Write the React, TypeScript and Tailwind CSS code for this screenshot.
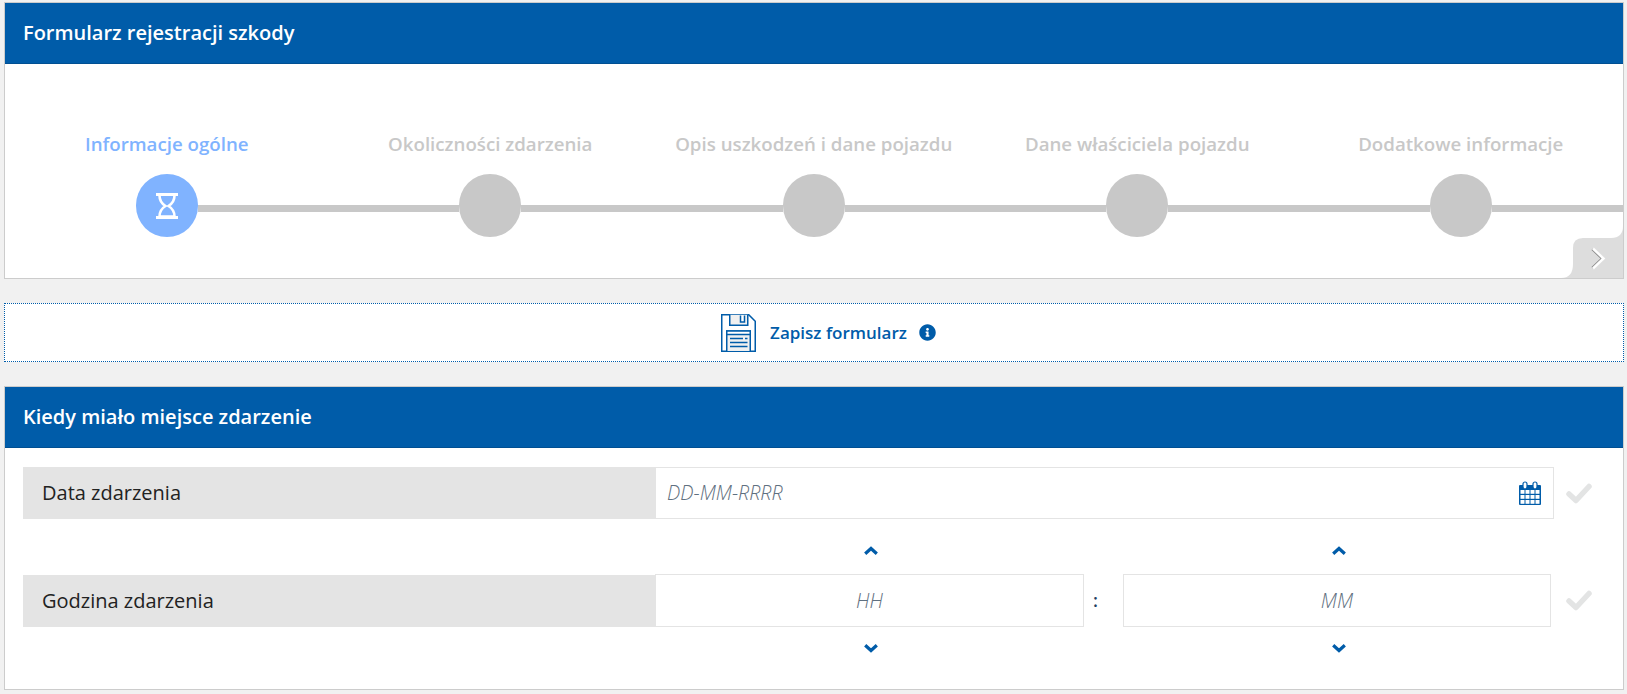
import { FaInfoCircle } from "react-icons/fa";

const steps = [
  "Informacje ogólne",
  "Okoliczności zdarzenia",
  "Opis uszkodzeń i dane pojazdu",
  "Dane właściciela pojazdu",
  "Dodatkowe informacje",
];

const Hourglass = () => (
  <svg width="24" height="26" viewBox="0 0 24 26" fill="none" stroke="#fff">
    <path d="M1 1.500h22M1 24.500h22" strokeWidth="2.800" />
    <path d="M4.500 2.500c0 5 2 8 6 10.500-4 2.500-6 6-6 10.500h15c0-4.500-2-8-6-10.500 4-2.500 6-5.500 6-10.500" strokeWidth="2.600" />
  </svg>
);

const Floppy = () => (
  <svg width="35" height="38" viewBox="0 0 35 38" fill="none" stroke="#005ca9" strokeWidth="1.500">
    <path d="M.75.75h27l6.500 6.500v30h-33.500z" fill="#fff" />
    <path d="M8.750.75v10.500h18v-10.500" fill="#f0f0f0" />
    <path d="M19.500 1.500v6.500h4v-6.500" fill="#fff" />
    <path d="M5.750 37v-20h23.500v20" fill="#f0f0f0" />
    <path d="M5.750 17h23.500v3.500h-23.500z" fill="#fff" />
    <path d="M9 24.500h13M24 24.500h2.500M9 28.500h17.500M9 32.500h17.500" />
  </svg>
);

const Calendar = () => (
  <svg width="24" height="25" viewBox="0 0 24 25" fill="none">
    <rect x="1" y="4" width="22" height="20" rx="1" fill="#005ca9" />
    <rect x="5" y="1" width="4" height="7" rx="2" fill="#fff" stroke="#005ca9" strokeWidth="1.200" />
    <rect x="15" y="1" width="4" height="7" rx="2" fill="#fff" stroke="#005ca9" strokeWidth="1.200" />
    {[9, 14, 19].map((y) =>
      [2.500, 7.500, 12.500, 17.500].map((x) => (
        <rect key={`${x}-${y}`} x={x} y={y} width="4" height="3.800" fill="#fff" />
      ))
    )}
  </svg>
);

const Check = () => (
  <svg width="26" height="21" viewBox="0 0 26 21" fill="none">
    <path d="M3 11l7 6.500L23 3.500" stroke="#e3e4e4" strokeWidth="5.500" strokeLinecap="round" strokeLinejoin="round" />
  </svg>
);

const Chevron = ({ down = false }: { down?: boolean }) => (
  <svg width="14" height="10" viewBox="0 0 14 10" fill="none">
    <path d={down ? "M1.200 2.200L7 7.500l5.800-5.300" : "M1.200 7.800L7 2.500l5.800 5.300"} stroke="#005ca9" strokeWidth="3.200" />
  </svg>
);

const SectionHeader = ({ title }: { title: string }) => (
  <div className="h-[61px] bg-[#005ca9] border-b border-[#004f92] pl-[18px] flex items-center">
    <h2 className="text-[20px] font-semibold text-white">{title}</h2>
  </div>
);

const App = () => {
  return (
    <div className="min-h-[694px] bg-[#f1f1f1] pt-[2px] pl-[4px] font-['Open_Sans',sans-serif]">
      <div className="w-[1620px] h-[277px] relative bg-white border border-[#cccccc]">
        <SectionHeader title="Formularz rejestracji szkody" />

        {/* Steps */}
        <div className="grid grid-cols-[repeat(5,323.500px)] pt-[66px]">
          {steps.map((step, i) => (
            <div key={step} className="flex flex-col items-center">
              <div className={`h-[28px] flex items-center text-[18.700px] font-semibold whitespace-nowrap ${i === 0 ? "text-[#80b3ff]" : "text-[#c8c8c8]"}`}>
                {step}
              </div>
              <div className="w-full flex items-center mt-[16px]">
                <div className={`flex-1 h-[7px] mt-[6px] ${i === 0 ? "" : "bg-[#c8c8c8]"}`} />
                <div className={`w-[62px] h-[63px] rounded-full flex items-center justify-center ${i === 0 ? "bg-[#80b3ff]" : "bg-[#c8c8c8]"}`}>
                  {i === 0 && <Hourglass />}
                </div>
                <div className="flex-1 h-[7px] mt-[6px] bg-[#c8c8c8]" />
              </div>
            </div>
          ))}
        </div>

        {/* Scroll tab */}
        <svg className="absolute right-0 bottom-0" width="62" height="52" viewBox="0 0 62 52">
          <path d="M62 0Q62 12 50 12H22Q12 12 12 22V38Q12 52 0 52H62Z" fill="#dddddd" />
          <path d="M31.500 23l10 9.500-10 9.500" fill="none" stroke="#8a8a8a" strokeWidth="3" />
          <path d="M32 22.500l10.500 10-10.500 10" fill="none" stroke="#fff" strokeWidth="2.500" />
        </svg>
      </div>

      {/* Save */}
      <div className="w-[1620px] h-[59px] mt-[24px] pl-[29px] bg-white border border-dotted border-[#005ca9] flex items-center justify-center">
        <Floppy />
        <span className="ml-[14px] text-[17px] font-semibold text-[#005ca9]">Zapisz formularz</span>
        <FaInfoCircle className="ml-[12px] text-[#005ca9]" size={17} />
      </div>

      {/* Event time */}
      <div className="w-[1620px] h-[304px] mt-[24px] bg-white border border-[#cccccc]">
        <SectionHeader title="Kiedy miało miejsce zdarzenie" />

        <div className="pl-[18px] pt-[19px]">
          <div className="flex items-center">
            <div className="w-[632px] h-[52px] bg-[#e4e4e4] pl-[19px] flex items-center text-[20px] text-[#222222]">Data zdarzenia</div>
            <div className="w-[899px] h-[52px] border border-[#e4e4e4] pl-[11px] pr-[11px] flex items-center justify-between">
              <span className="text-[19.700px] font-light italic text-[#5f7080]">DD-MM-RRRR</span>
              <Calendar />
            </div>
            <div className="ml-[12px]">
              <Check />
            </div>
          </div>

          <div className="flex flex-col mt-[22px]">
            <div className="flex h-[33px] items-start pl-[632px]">
              <div className="w-[429px] flex justify-center pl-[2px] pt-[5px]"><Chevron /></div>
              <div className="w-[39px]" />
              <div className="w-[428px] flex justify-center pl-[3px] pt-[5px]"><Chevron /></div>
            </div>
            <div className="flex items-center">
              <div className="w-[632px] h-[52px] bg-[#e4e4e4] pl-[19px] flex items-center text-[20px] text-[#222222]">Godzina zdarzenia</div>
              <div className="w-[429px] h-[53px] border border-[#e4e4e4] flex items-center justify-center text-[19.700px] font-light italic text-[#5f7080]">HH</div>
              <div className="w-[39px] pl-[9px] text-[18px] font-semibold text-[#1f3f5f]">:</div>
              <div className="w-[428px] h-[53px] border border-[#e4e4e4] flex items-center justify-center text-[19.700px] font-light italic text-[#5f7080]">MM</div>
              <div className="ml-[15px]">
                <Check />
              </div>
            </div>
            <div className="flex pl-[632px] pt-[16px]">
              <div className="w-[429px] flex justify-center pl-[2px]"><Chevron down /></div>
              <div className="w-[39px]" />
              <div className="w-[428px] flex justify-center pl-[3px]"><Chevron down /></div>
            </div>
          </div>
        </div>
      </div>
    </div>
  );
};

export default App;
